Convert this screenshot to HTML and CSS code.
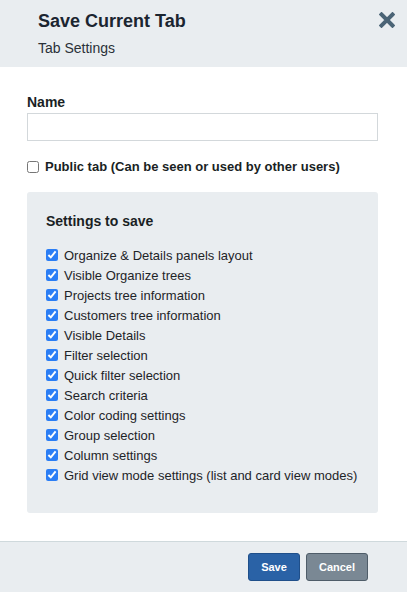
FILE: index.html
```html
<!DOCTYPE html>
<html lang="en">
<head>
  <meta charset="UTF-8">
  <title>Save Current Tab</title>
  <link rel="stylesheet" href="styles.css">
</head>
<body>

<div class="modal">
  <div class="modal-header">
    <div>
      <h1>Save Current Tab</h1>
      <div class="subtitle">Tab Settings</div>
    </div>
    <button class="close" aria-label="Close">
      <svg width="16" height="16" viewBox="0 0 16 16"><path d="M2.5 2.5 L13.5 13.5 M13.5 2.5 L2.5 13.5" stroke="#4b6476" stroke-width="4" stroke-linecap="square"/></svg>
    </button>
  </div>

  <div class="modal-body">
    <label class="field-label" for="tabName">Name</label>
    <input id="tabName" class="text-input" type="text">

    <label class="public">
      <input type="checkbox" class="box-empty">
      <span>Public tab (Can be seen or used by other users)</span>
    </label>

    <div class="settings">
      <div class="settings-title">Settings to save</div>
      <ul class="settings-list">
        <li><input type="checkbox" checked> Organize &amp; Details panels layout</li>
        <li><input type="checkbox" checked> Visible Organize trees</li>
        <li><input type="checkbox" checked> Projects tree information</li>
        <li><input type="checkbox" checked> Customers tree information</li>
        <li><input type="checkbox" checked> Visible Details</li>
        <li><input type="checkbox" checked> Filter selection</li>
        <li><input type="checkbox" checked> Quick filter selection</li>
        <li><input type="checkbox" checked> Search criteria</li>
        <li><input type="checkbox" checked> Color coding settings</li>
        <li><input type="checkbox" checked> Group selection</li>
        <li><input type="checkbox" checked> Column settings</li>
        <li><input type="checkbox" checked> Grid view mode settings (list and card view modes)</li>
      </ul>
    </div>
  </div>

  <div class="modal-footer">
    <button class="btn btn-save">Save</button>
    <button class="btn btn-cancel">Cancel</button>
  </div>
</div>

</body>
</html>
```

FILE: styles.css
```css
body {
  margin: 0;
  font-family: "Liberation Sans", Arial, sans-serif;
  color: #1a1f24;
  background: #fff;
}
.modal {
  width: 407px;
  height: 592px;
  display: flex;
  flex-direction: column;
}
.modal-header {
  background: #e9edf0;
  height: 67px;
  box-sizing: border-box;
  padding: 10px 12px 0 38px;
  display: flex;
  justify-content: space-between;
  align-items: flex-start;
}
.modal-header h1 {
  margin: 0;
  font-size: 18px;
  font-weight: bold;
  line-height: 22px;
  color: #1b2530;
}
.subtitle {
  font-size: 14px;
  margin-top: 8px;
  color: #2a3138;
}
.close {
  border: none;
  background: none;
  padding: 0;
  margin-top: 2px;
  cursor: pointer;
  line-height: 0;
}
.modal-body {
  flex: 1;
  padding: 27px 29px 0 27px;
}
.field-label {
  display: block;
  font-size: 14px;
  font-weight: bold;
  line-height: 16px;
}
.text-input {
  display: block;
  box-sizing: border-box;
  width: 351px;
  height: 28px;
  margin-top: 3px;
  border: 1px solid #d3d8db;
  border-radius: 0;
  outline: none;
}
.public {
  display: flex;
  align-items: center;
  margin-top: 18px;
  font-size: 13px;
  font-weight: bold;
}
.public input {
  margin: 0 6px 0 0;
  width: 12px;
  height: 12px;
}
.settings {
  margin-top: 18px;
  background: #e9edf0;
  border-radius: 3px;
  width: 351px;
  height: 321px;
  box-sizing: border-box;
  padding: 21px 19px;
}
.settings-title {
  font-size: 14px;
  font-weight: bold;
  line-height: 16px;
}
.settings-list {
  list-style: none;
  margin: 16px 0 0 0;
  padding: 0;
}
.settings-list li {
  display: flex;
  align-items: center;
  height: 20px;
  font-size: 13px;
  color: #1e2428;
}
.settings-list input {
  margin: 0 6px 0 0;
  width: 12px;
  height: 12px;
  accent-color: #2b7ef5;
}
.modal-footer {
  background: #e9edf0;
  border-top: 1px solid #cfd9dc;
  height: 50px;
  display: flex;
  justify-content: flex-end;
  align-items: center;
  padding-right: 39px;
  gap: 6px;
}
.btn {
  font-family: "Liberation Sans", Arial, sans-serif;
  font-size: 11px;
  font-weight: bold;
  color: #fff;
  height: 28px;
  border-radius: 3px;
  cursor: pointer;
}
.btn-save {
  width: 52px;
  background: #2a62a6;
  border: 1px solid #1f4f8a;
}
.btn-cancel {
  width: 62px;
  background: #7a8894;
  border: 1px solid #4f5d69;
}
```
